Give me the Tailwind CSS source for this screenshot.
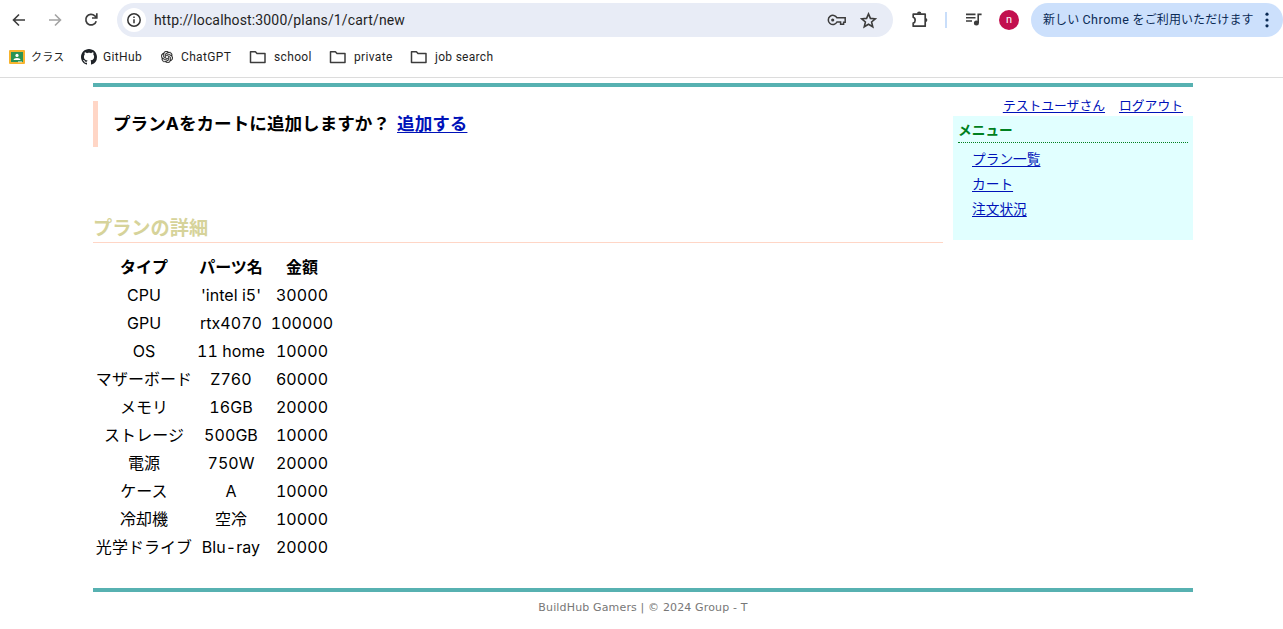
<!DOCTYPE html>
<html lang="ja">
<head>
<meta charset="utf-8">
<title>BuildHub Gamers</title>
<script src="https://cdn.jsdelivr.net/npm/@tailwindcss/browser@4"></script>
</head>
<body class="h-[629px] overflow-hidden bg-white font-['Inter','Noto_Sans_CJK_JP',sans-serif] text-black">
<header class="h-[78px] border-b border-[#dcdcdc] font-['Roboto','Noto_Sans_CJK_JP',sans-serif] text-[#1f1f1f]">
  <div class="flex h-[40px] items-center">
    <svg class="ml-[11px] size-4 shrink-0" viewBox="0 0 16 16" fill="none" stroke="#3c3c3c" stroke-width="1.6"><path d="M14 8H3M8 2.5L2.5 8L8 13.5"/></svg>
    <svg class="ml-[20px] size-4 shrink-0" viewBox="0 0 16 16" fill="none" stroke="#a3a3a3" stroke-width="1.6"><path d="M2 8H13M8 2.5L13.5 8L8 13.5"/></svg>
    <svg class="ml-[20px] size-4 shrink-0" viewBox="0 0 16 16" fill="none" stroke="#3c3c3c" stroke-width="1.7"><path d="M13.2 9.2A5.3 5.3 0 1 1 11.8 3.8L13.4 5.6M13.8 1.2V6H9"/></svg>
    <div class="ml-[18px] flex h-[34px] w-[776px] shrink-0 items-center rounded-full bg-[#e8ecf6] pl-[5px]">
      <span class="flex size-6 items-center justify-center rounded-full bg-white"><svg class="size-4" viewBox="0 0 16 16" fill="none" stroke="#333" stroke-width="1.5"><circle cx="8" cy="8" r="6.2"/><path d="M8 7.2V11.3M8 4.6V6.1"/></svg></span>
      <span class="ml-2 w-[260px] whitespace-nowrap text-[14px] tracking-[0.15px]">http://localhost:3000/plans/1/cart/new</span>
      <svg class="ml-[413px] h-[14px] w-5 shrink-0" viewBox="0 0 20 14" fill="none" stroke="#3c3c3c" stroke-width="1.5"><path d="M10 4.8H18.2V9.2H16.6V11.2H13.6V9H10A4.6 4.6 0 1 1 10 4.8Z"/><circle cx="5.7" cy="7" r="1.6" fill="#3c3c3c" stroke="none"/></svg>
      <svg class="ml-[13px] size-[17px] shrink-0" viewBox="0 0 16 16" fill="none" stroke="#3c3c3c" stroke-width="1.5"><path d="M8 1.8L9.8 6L14.4 6.4L10.9 9.4L12 13.9L8 11.5L4 13.9L5.1 9.4L1.6 6.4L6.2 6Z"/></svg>
    </div>
    <svg class="ml-[17px] size-5 shrink-0" viewBox="0 0 20 20" fill="none" stroke="#3c3c3c" stroke-width="1.7"><path d="M3.2 4.2H15.2V16.2H3.2V13.1C5.8 12.4 5.8 8 3.2 7.3Z" stroke-linejoin="round"/><path d="M7 3.8A2.2 2.2 0 0 1 11.4 3.8ZM15.8 8A2.2 2.2 0 0 1 15.8 12.2Z" fill="#3c3c3c" stroke="none"/></svg>
    <span class="ml-[15px] h-4 w-[2px] shrink-0 bg-[#c9defa]"></span>
    <svg class="ml-[18px] h-4 w-[18px] shrink-0" viewBox="0 0 18 16" fill="none" stroke="#3c3c3c" stroke-width="1.6"><path d="M1 2.4H10.5M1 5.7H10.5M1 9H7M13.2 11V2.4H16.6"/><circle cx="11.4" cy="11" r="2.5" fill="#3c3c3c" stroke="none"/></svg>
    <span class="ml-4 flex size-5 shrink-0 items-center justify-center rounded-full bg-[#c2104f] text-[11px] text-white">n</span>
    <div class="ml-3 flex h-[34px] w-[252px] shrink-0 items-center rounded-full bg-[#cce0fc] pl-3 text-[#0a2a55]">
      <span class="w-[216px] whitespace-nowrap pt-px text-[12px] tracking-[0.1px]">新しい <span class="text-[12.5px] tracking-[0.55px]">Chrome</span> をご利用いただけます</span>
      <svg class="ml-[5px] h-4 w-[6px]" viewBox="0 0 6 16" fill="#0a2a55"><circle cx="3" cy="2.2" r="1.6"/><circle cx="3" cy="8" r="1.6"/><circle cx="3" cy="13.8" r="1.6"/></svg>
    </div>
  </div>
  <nav class="flex h-[34px] items-center whitespace-nowrap text-[12px] tracking-[0.35px]">
    <svg class="ml-[9px] h-[14px] w-4 shrink-0" viewBox="0 0 16 14"><rect width="16" height="14" rx="1" fill="#f7b32d"/><rect x="2" y="2" width="12" height="10" fill="#2b9355"/><circle cx="8" cy="5.4" r="1.6" fill="#fff"/><path d="M4.5 10C4.5 7.2 11.5 7.2 11.5 10Z" fill="#fff"/><path d="M9 11.5H13V12.3H9Z" fill="#fff"/></svg>
    <span class="ml-[6px] w-[36px] pt-[2px] text-[11px] tracking-[0.2px]">クラス</span>
    <svg class="ml-[14px] size-4 shrink-0" viewBox="0 0 16 16" fill="#1f2328"><path d="M8 0C3.58 0 0 3.58 0 8c0 3.54 2.29 6.53 5.47 7.59.4.07.55-.17.55-.38 0-.19-.01-.82-.01-1.49-2.01.37-2.53-.49-2.69-.94-.09-.23-.48-.94-.82-1.13-.28-.15-.68-.52-.01-.53.63-.01 1.08.58 1.23.82.72 1.21 1.87.87 2.33.66.07-.52.28-.87.51-1.07-1.78-.2-3.64-.89-3.64-3.95 0-.87.31-1.59.82-2.15-.08-.2-.36-1.02.08-2.12 0 0 .67-.21 2.2.82.64-.18 1.32-.27 2-.27s1.36.09 2 .27c1.53-1.04 2.2-.82 2.2-.82.44 1.1.16 1.92.08 2.12.51.56.82 1.27.82 2.15 0 3.07-1.87 3.75-3.65 3.95.29.25.54.73.54 1.48 0 1.07-.01 1.93-.01 2.2 0 .21.15.46.55.38A8.01 8.01 0 0 0 16 8c0-4.42-3.58-8-8-8Z"/></svg>
    <span class="ml-[6px] w-[44px]">GitHub</span>
    <svg class="ml-[14px] size-3 shrink-0" viewBox="0 0 24 24" fill="#222" stroke="#222" stroke-width=".5"><path d="M22.28 9.82a5.98 5.98 0 0 0-.52-4.91 6.05 6.05 0 0 0-6.51-2.9A6.07 6.07 0 0 0 4.98 4.18a5.98 5.98 0 0 0-4 2.9 6.05 6.05 0 0 0 .74 7.1 5.98 5.98 0 0 0 .51 4.91 6.05 6.05 0 0 0 6.51 2.9A5.98 5.98 0 0 0 13.26 24a6.06 6.06 0 0 0 5.77-4.21 5.99 5.99 0 0 0 4-2.9 6.06 6.06 0 0 0-.75-7.07zM13.26 22.43a4.48 4.48 0 0 1-2.88-1.04l.14-.08 4.78-2.76a.79.79 0 0 0 .39-.68v-6.74l2.02 1.17.04.05v5.58a4.5 4.5 0 0 1-4.49 4.5zM3.6 18.3a4.47 4.47 0 0 1-.54-3.01l.14.09 4.78 2.76a.77.77 0 0 0 .78 0l5.84-3.37v2.33l-.03.06-4.83 2.79A4.5 4.5 0 0 1 3.6 18.3zM2.34 7.9a4.49 4.49 0 0 1 2.37-1.98v5.68a.77.77 0 0 0 .39.68l5.81 3.35-2.02 1.17h-.07l-4.83-2.79A4.5 4.5 0 0 1 2.34 7.87zm16.6 3.86L13.1 8.36l2.02-1.16h.07l4.83 2.79a4.49 4.49 0 0 1-.68 8.1v-5.68a.79.79 0 0 0-.4-.65zm2.01-3.02l-.14-.09-4.77-2.78a.78.78 0 0 0-.79 0L9.41 9.23V6.9l.03-.06 4.83-2.79a4.5 4.5 0 0 1 6.68 4.66zM8.31 12.86l-2.02-1.16-.04-.06V6.07a4.5 4.5 0 0 1 7.38-3.45l-.14.08L8.7 5.46a.79.79 0 0 0-.39.68zm1.09-2.37 2.6-1.5 2.61 1.5v3l-2.6 1.5-2.61-1.5z"/></svg>
    <span class="ml-2 w-[56px]">ChatGPT</span>
    <svg class="ml-[12px] h-4 w-[17px] shrink-0" viewBox="0 0 17 16" fill="none" stroke="#3c3c3c" stroke-width="1.5" stroke-linejoin="round"><path d="M1.5 2.7H6.4L8 4.5H16V13.5H1.5Z"/></svg>
    <span class="ml-2 w-[42px]">school</span>
    <svg class="ml-[13px] h-4 w-[17px] shrink-0" viewBox="0 0 17 16" fill="none" stroke="#3c3c3c" stroke-width="1.5" stroke-linejoin="round"><path d="M1.5 2.7H6.4L8 4.5H16V13.5H1.5Z"/></svg>
    <span class="ml-2 w-[42px]">private</span>
    <svg class="ml-[14px] h-4 w-[17px] shrink-0" viewBox="0 0 17 16" fill="none" stroke="#3c3c3c" stroke-width="1.5" stroke-linejoin="round"><path d="M1.5 2.7H6.4L8 4.5H16V13.5H1.5Z"/></svg>
    <span class="ml-2 tracking-[0.3px]">job search</span>
  </nav>
</header>
<div class="ml-[93px] mt-[5px] w-[1100px]">
  <div class="flex h-[509px] justify-between border-y-4 border-[#57b1b1]">
    <main class="w-[850px] pt-[14px]">
      <h1 class="flex h-[46px] items-center whitespace-nowrap border-l-[5px] border-[#ffd6c6] pl-[15px] text-[17.6px] font-bold"><span>プランAをカートに追加しますか？</span><a class="ml-[7px] text-[#0012b8] underline underline-offset-2">追加する</a></h1>
      <h2 class="mt-[67px] flex h-[29px] items-center border-b border-[#ffd6c6] text-[19.2px] font-bold text-[#d6d39a]">プランの詳細</h2>
      <table class="mt-[10px] w-[244px] table-fixed whitespace-nowrap text-center text-[16px] leading-[28px] tabular-nums">
        <colgroup><col class="w-[102px]"><col class="w-[72px]"><col class="w-[70px]"></colgroup>
        <thead><tr><th>タイプ</th><th>パーツ名</th><th>金額</th></tr></thead>
        <tbody class="tracking-[0.05px]">
          <tr><td>CPU</td><td>'intel i5'</td><td>30000</td></tr>
          <tr><td>GPU</td><td>rtx4070</td><td>100000</td></tr>
          <tr><td>OS</td><td>11 home</td><td>10000</td></tr>
          <tr><td>マザーボード</td><td>Z760</td><td>60000</td></tr>
          <tr><td>メモリ</td><td>16GB</td><td>20000</td></tr>
          <tr><td>ストレージ</td><td>500GB</td><td>10000</td></tr>
          <tr><td>電源</td><td>750W</td><td>20000</td></tr>
          <tr><td>ケース</td><td>A</td><td>10000</td></tr>
          <tr><td>冷却機</td><td>空冷</td><td>10000</td></tr>
          <tr><td>光学ドライブ</td><td>Blu-ray</td><td>20000</td></tr>
        </tbody>
      </table>
    </main>
    <aside class="w-[240px] pt-[9px] text-[#0012b8]">
      <div class="flex h-5 items-center justify-end gap-[14px] pr-[10px] text-[12.8px] underline underline-offset-2"><a>テストユーザさん</a><a>ログアウト</a></div>
      <div class="h-[124px] bg-[#e1ffff] px-[5px]">
        <h3 class="flex h-[27px] items-center border-b border-dotted border-[#008020] pt-[3px] text-[13.7px] font-bold text-[#008020]">メニュー</h3>
        <ul class="pl-[14px] pt-[4px] text-[13.7px] leading-[25px] underline underline-offset-2"><li>プラン一覧</li><li>カート</li><li>注文状況</li></ul>
      </div>
    </aside>
  </div>
  <footer class="pt-2 text-center font-['DejaVu_Sans',sans-serif] text-[11px] leading-4 tracking-[0.15px] text-[#777]">BuildHub Gamers | © 2024 Group - T</footer>
</div>
</body>
</html>
